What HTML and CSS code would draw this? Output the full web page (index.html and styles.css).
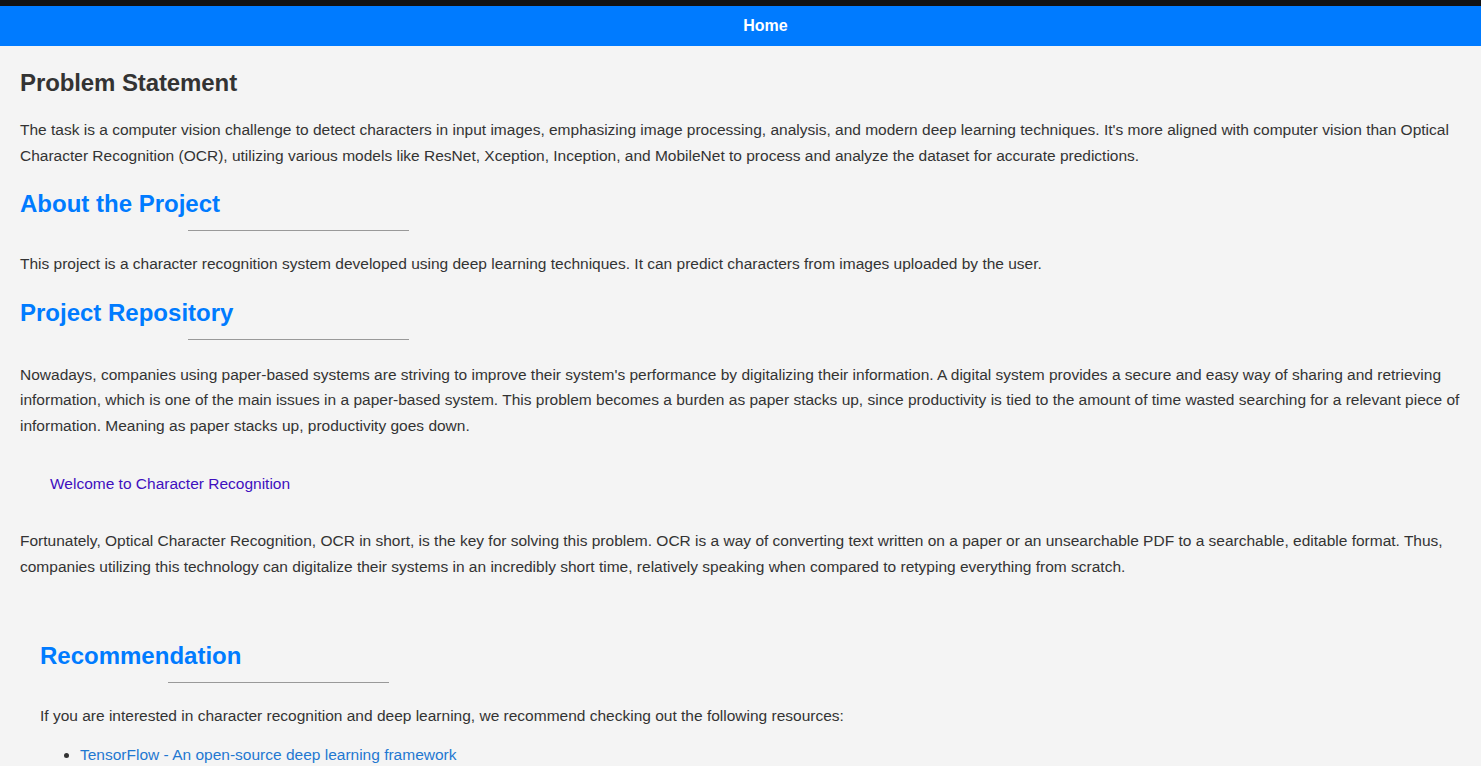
FILE: index.html
```html
<!DOCTYPE html>
<html lang="en">
<head>
<meta charset="utf-8">
<title>Character Recognition</title>
<link rel="stylesheet" href="styles.css">
</head>
<body>
<div class="topstrip"></div>
<nav class="navbar"><ul class="nav-list"><li><a class="nav-link" href="#">Home</a></li></ul></nav>
<main class="content">
  <h2 class="title">Problem Statement</h2>
  <p class="text">The task is a computer vision challenge to detect characters in input images, emphasizing image processing, analysis, and modern deep learning techniques. It's more aligned with computer vision than Optical Character Recognition (OCR), utilizing various models like ResNet, Xception, Inception, and MobileNet to process and analyze the dataset for accurate predictions.</p>

  <h2 class="section-title">About the Project</h2>
  <p class="text">This project is a character recognition system developed using deep learning techniques. It can predict characters from images uploaded by the user.</p>

  <h2 class="section-title">Project Repository</h2>
  <p class="text text-repo">Nowadays, companies using paper-based systems are striving to improve their system's performance by digitalizing their information. A digital system provides a secure and easy way of sharing and retrieving information, which is one of the main issues in a paper-based system. This problem becomes a burden as paper stacks up, since productivity is tied to the amount of time wasted searching for a relevant piece of information. Meaning as paper stacks up, productivity goes down.</p>

  <div class="welcome"><a class="welcome-link" href="#">Welcome to Character Recognition</a></div>

  <p class="text">Fortunately, Optical Character Recognition, OCR in short, is the key for solving this problem. OCR is a way of converting text written on a paper or an unsearchable PDF to a searchable, editable format. Thus, companies utilizing this technology can digitalize their systems in an incredibly short time, relatively speaking when compared to retyping everything from scratch.</p>

  <section class="recommend">
    <h2 class="section-title rec-title">Recommendation</h2>
    <p class="text">If you are interested in character recognition and deep learning, we recommend checking out the following resources:</p>
    <ul class="resources">
      <li><a class="res-link" href="#">TensorFlow - An open-source deep learning framework</a></li>
    </ul>
  </section>
</main>
</body>
</html>
```
FILE: styles.css
```css
html, body {
  margin: 0;
  padding: 0;
}
body {
  background: #f4f4f4;
  font-family: "Liberation Sans", Arial, sans-serif;
  color: #333;
  overflow: hidden;
  height: 766px;
}
.topstrip {
  height: 6px;
  background: #121212;
}
.navbar {
  background: #007bff;
  height: 40px;
  display: flex;
  align-items: center;
  justify-content: center;
}
.nav-list {
  list-style: none;
  margin: 0;
  padding: 0 0 0 50px;
}
.nav-link {
  color: #fff;
  font-weight: bold;
  font-size: 16px;
  text-decoration: none;
}
.content {
  padding: 0 20px;
}
.title {
  font-size: 24px;
  margin: 23px 0 0;
  color: #333;
  letter-spacing: -0.1px;
}
.text {
  font-size: 15.5px;
  line-height: 25.5px;
  margin: 20px 0 0;
}
.text-repo {
  margin-top: 22px;
}
.section-title {
  font-size: 24px;
  color: #007bff;
  margin: 22px 0 1px;
}
.section-title::after {
  content: "";
  display: block;
  width: 221px;
  height: 1px;
  background: #999;
  margin: 12px 0 0 168px;
}
.rec-title::after {
  margin-left: 128px;
}
.welcome {
  padding: 0 30px;
  margin: 37px 0 35px;
  font-size: 15.5px;
}
.welcome-link {
  color: #3f0fbf;
  text-decoration: none;
}
.recommend {
  padding: 0 20px;
  margin-top: 63px;
}
.resources {
  margin: 13px 0 0;
  padding-left: 40px;
  font-size: 15.5px;
  line-height: 25.5px;
}
.res-link {
  color: #1f78d1;
  text-decoration: none;
}
```
